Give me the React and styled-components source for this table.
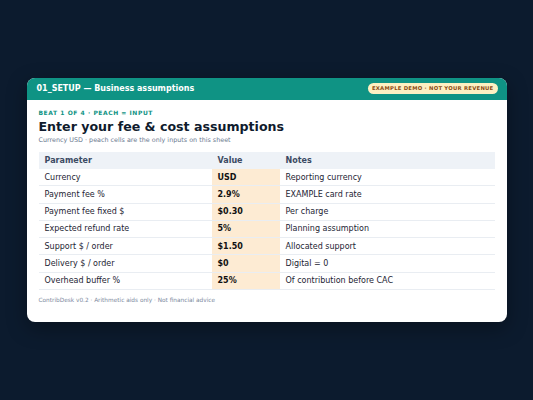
import React from 'react'
import styled, { createGlobalStyle } from 'styled-components'

const GlobalStyle = createGlobalStyle`
  html, body {
    margin: 0;
    padding: 0;
    height: 100%;
  }
  body {
    background: #0c1b2e;
    font-family: "DejaVu Sans", "Liberation Sans", sans-serif;
  }
  #root {
    height: 100%;
  }
`

const Page = styled.div`
  height: 100vh;
  display: flex;
  align-items: center;
  justify-content: center;
`

const Card = styled.div`
  width: 480px;
  background: #ffffff;
  border-radius: 8px;
  overflow: hidden;
  box-shadow: 0 6px 20px rgba(0, 0, 0, 0.35);
`

const TopBar = styled.div`
  height: 22px;
  background: #0f9384;
  display: flex;
  align-items: center;
  justify-content: space-between;
  padding: 0 9px 0 10px;
`

const BarTitle = styled.div`
  color: #ffffff;
  font-size: 8px;
  font-weight: bold;
`

const Badge = styled.div`
  background: #fdf0c2;
  color: #8a4a12;
  font-size: 5.3px;
  line-height: 7px;
  font-weight: bold;
  letter-spacing: 0.25px;
  padding: 2px 4px;
  border-radius: 6px;
`

const Body = styled.div`
  padding: 9.5px 12px 18px;
`

const Eyebrow = styled.div`
  color: #0f9384;
  font-size: 6px;
  line-height: 7px;
  font-weight: bold;
  letter-spacing: 0.55px;
`

const Title = styled.h1`
  margin: 2.5px 0 0;
  color: #0f1b2d;
  font-size: 12.6px;
  line-height: 16px;
  font-weight: bold;
`

const Subtitle = styled.div`
  margin-top: 1px;
  color: #6b7a90;
  font-size: 6.4px;
  line-height: 8px;
`

const Table = styled.table`
  margin-top: 8px;
  width: 100%;
  border-collapse: collapse;
  table-layout: fixed;
  font-size: 8px;
`

const Col = styled.col`
  width: ${(p) => p.$w};
`

const HeadCell = styled.th`
  background: #eef2f7;
  color: #3b4a63;
  font-weight: bold;
  text-align: left;
  height: 17px;
  padding: 0 6px;
`

const Cell = styled.td`
  height: 16.3px;
  padding: 0 6px;
  border-bottom: 1px solid #e9edf2;
  color: #1d2433;
  background: ${(p) => (p.$input ? '#fdebd3' : 'transparent')};
  font-weight: ${(p) => (p.$input ? 'bold' : 'normal')};
  ${(p) => p.$input && 'color: #111111;'}
`

const Footer = styled.div`
  margin-top: 6px;
  color: #7d8aa0;
  font-size: 5.8px;
  line-height: 8px;
`

const rows = [
  ['Currency', 'USD', 'Reporting currency'],
  ['Payment fee %', '2.9%', 'EXAMPLE card rate'],
  ['Payment fee fixed $', '$0.30', 'Per charge'],
  ['Expected refund rate', '5%', 'Planning assumption'],
  ['Support $ / order', '$1.50', 'Allocated support'],
  ['Delivery $ / order', '$0', 'Digital = 0'],
  ['Overhead buffer %', '25%', 'Of contribution before CAC'],
]

export default function App() {
  return (
    <Page>
      <GlobalStyle />
      <Card>
        <TopBar>
          <BarTitle>01_SETUP — Business assumptions</BarTitle>
          <Badge>EXAMPLE DEMO · NOT YOUR REVENUE</Badge>
        </TopBar>
        <Body>
          <Eyebrow>BEAT 1 OF 4 · PEACH = INPUT</Eyebrow>
          <Title>Enter your fee &amp; cost assumptions</Title>
          <Subtitle>Currency USD · peach cells are the only inputs on this sheet</Subtitle>
          <Table>
            <colgroup>
              <Col $w="173px" />
              <Col $w="68px" />
              <Col $w="auto" />
            </colgroup>
            <thead>
              <tr>
                <HeadCell>Parameter</HeadCell>
                <HeadCell>Value</HeadCell>
                <HeadCell>Notes</HeadCell>
              </tr>
            </thead>
            <tbody>
              {rows.map(([param, value, note]) => (
                <tr key={param}>
                  <Cell>{param}</Cell>
                  <Cell $input>{value}</Cell>
                  <Cell>{note}</Cell>
                </tr>
              ))}
            </tbody>
          </Table>
          <Footer>ContribDesk v0.2 · Arithmetic aids only · Not financial advice</Footer>
        </Body>
      </Card>
    </Page>
  )
}
